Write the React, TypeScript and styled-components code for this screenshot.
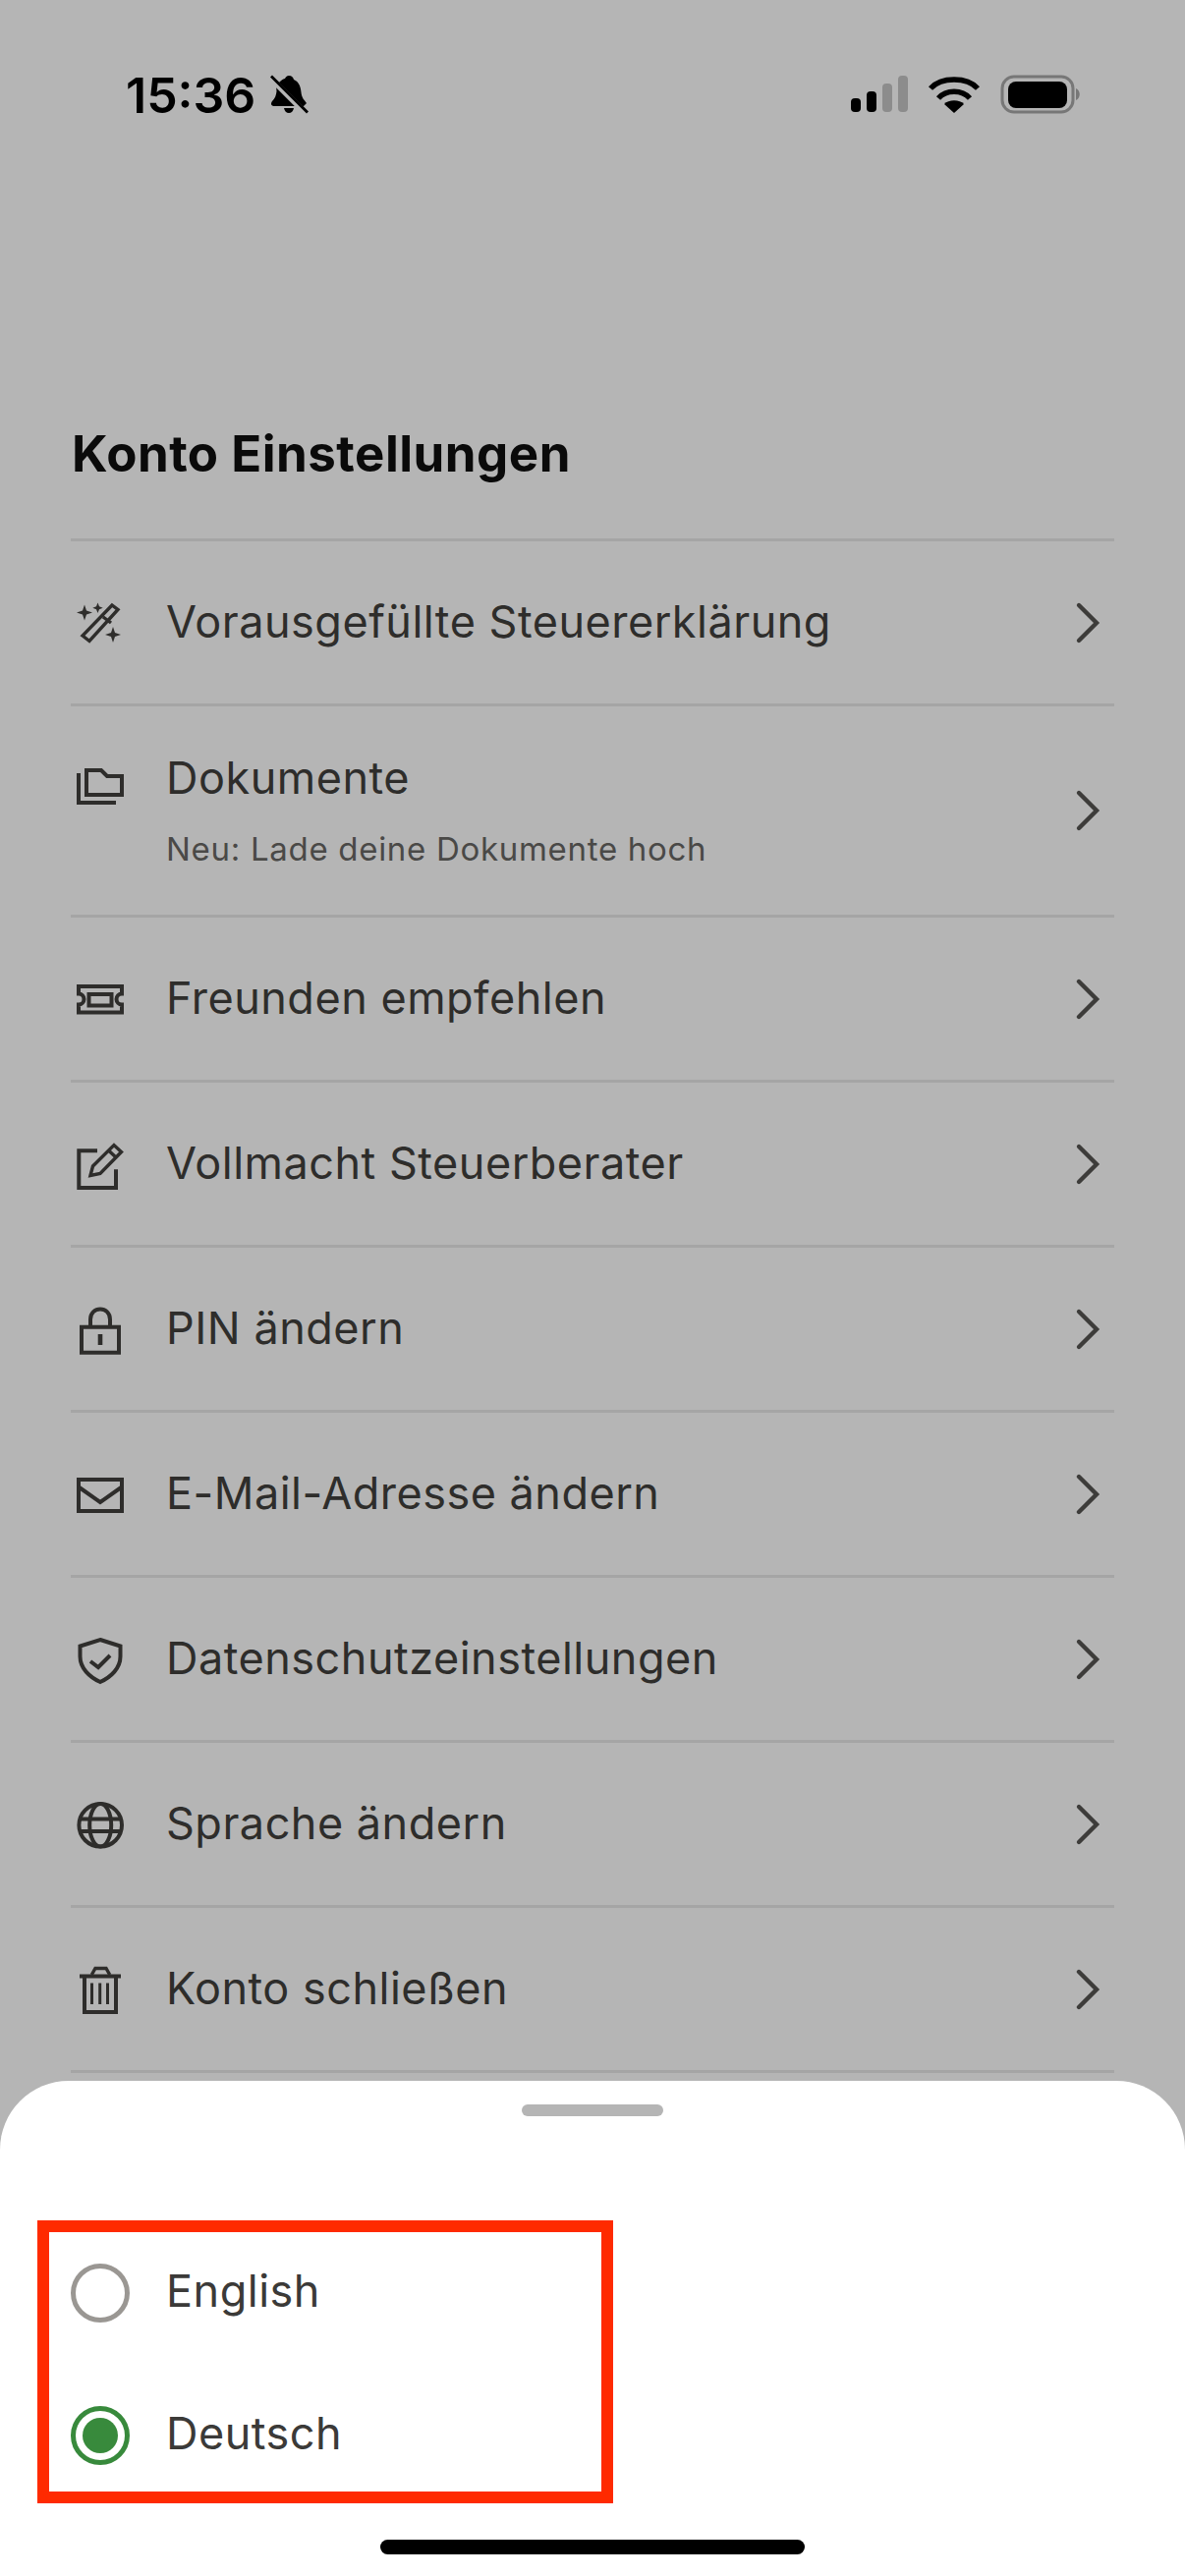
import React from 'react';
import styled, { createGlobalStyle } from 'styled-components';

const GlobalStyle = createGlobalStyle`
  html, body {
    margin: 0;
    padding: 0;
    background: #b5b5b5;
  }
  * {
    box-sizing: border-box;
  }
`;

const INK = '#2e2d2b';

const Svg: React.FC<{ children: React.ReactNode }> = ({ children }) => (
  <svg width="60" height="60" viewBox="0 0 60 60" fill="none" stroke={INK} strokeWidth="4">
    {children}
  </svg>
);

const WandIcon = () => (
  <Svg>
    <path d="M12 43 L19 48.5 L48 16.5 L42 12 Z M33 24 L41 30" strokeWidth="3.4" />
    <path
      d="M14 11.5 L16 17.5 L22 19.5 L16 21.5 L14 27.5 L12 21.5 L6 19.5 L12 17.5 Z M27.5 9.5 L29 13.2 L32.7 14.7 L29 16.2 L27.5 20 L26 16.2 L22.3 14.7 L26 13.2 Z M43 34 L45 40 L51 42 L45 44 L43 50 L41 44 L35 42 L41 40 Z"
      fill={INK}
      stroke="none"
    />
  </Svg>
);

const FolderIcon = () => (
  <Svg>
    <path d="M16 13 H31 L37 19 H52 V38 H16 Z" />
    <path d="M8 16 V46 H46" />
  </Svg>
);

const TicketIcon = () => (
  <Svg>
    <path d="M8 17 H52 V24.5 A5.5 5.5 0 0 0 52 35.5 V43.5 H8 V35.5 A5.5 5.5 0 0 0 8 24.5 Z" />
    <path d="M18.5 25 H41.5 V36.5 H18.5 Z" />
  </Svg>
);

const PencilIcon = () => (
  <Svg>
    <path d="M27 16.3 H8.3 V54 H46 V35.3" />
    <path d="M20 41.5 L22.5 32 L44 10.5 L51.5 17.5 L30 39.5 Z M38.5 16 L46 23" strokeWidth="3.4" />
  </Svg>
);

const LockIcon = () => (
  <Svg>
    <path d="M11 27.7 H49 V53.7 H11 Z" />
    <path d="M20 27 V20 C20 6 40 6 40 20 V27" />
    <path d="M30 35 V46" strokeWidth="4.6" />
  </Svg>
);

const MailIcon = () => (
  <Svg>
    <path d="M8 15 H52 V47 H8 Z" />
    <path d="M8 22.5 L30 38 L52 22.5" />
  </Svg>
);

const ShieldIcon = () => (
  <Svg>
    <path d="M30 10 L50.5 16.5 V27 C50.5 39 41 48 30 53 C19 48 9.5 39 9.5 27 V16.5 Z" />
    <path d="M20 32 L28 38 L40 26" />
  </Svg>
);

const GlobeIcon = () => (
  <Svg>
    <circle cx="30.2" cy="30.8" r="21.8" />
    <ellipse cx="30.2" cy="30.8" rx="11" ry="21.8" />
    <path d="M9 24.5 H51 M9 37 H51" />
  </Svg>
);

const TrashIcon = () => (
  <Svg>
    <path d="M9 16.6 H51 M14 17 V53 H46 V17" />
    <path d="M21.3 15 L25 8.5 H36 L39.7 15" strokeWidth="3.4" />
    <path d="M21.5 23.5 V45 M29.7 23.5 V45 M37.5 23.5 V45" strokeWidth="3" />
  </Svg>
);

const Chevron = () => (
  <svg width="28" height="44" viewBox="0 0 28 44" fill="none" stroke="#3d3c3a" strokeWidth="4.4" strokeLinecap="round">
    <path d="M6 4 L24 22 L6 40" />
  </svg>
);

const BellOff = () => (
  <svg width="40" height="42" viewBox="0 0 40 42">
    <path
      d="M20 1 C23 1 24.5 3 25 5 C30 7 32 12 32.5 18 C33 24 36 26 38 29 L35 32 H6 C2 32 1 30 3 27 C6 24 7 21 7.5 17 L7 11 L11 7 C13 5 15 4 16 4 C16.5 2.5 18 1 20 1 Z M15 34 H25 C24.5 37 22.5 39 20 39 C17.5 39 15.5 37 15 34 Z"
      fill="#000"
    />
    <path d="M1 3 L39 41" stroke="#b5b5b5" strokeWidth="6" />
    <path d="M2 1.5 L39 38.5" stroke="#000" strokeWidth="2.8" />
  </svg>
);

const StatusIcons = () => (
  <svg width="236" height="44" viewBox="0 0 236 44">
    <rect x="0" y="25" width="10" height="14" rx="4" fill="#000" />
    <rect x="16" y="18" width="10" height="21" rx="4" fill="#000" />
    <rect x="32" y="10" width="10" height="29" rx="4" fill="#8c8c8c" />
    <rect x="48" y="2" width="10" height="37" rx="4" fill="#8c8c8c" />
    <path d="M105 40 L95 31 C99 26 111 26 115 31 Z" fill="#000" />
    <path d="M89 25 C97 16 113 16 121 25" fill="none" stroke="#000" strokeWidth="5.5" />
    <path d="M81 15 C92 3 118 3 129 15" fill="none" stroke="#000" strokeWidth="5.5" />
    <rect x="154" y="3" width="72" height="36" rx="12" fill="none" stroke="#777" strokeWidth="3" />
    <rect x="160" y="8" width="60" height="27" rx="8" fill="#000" />
    <path d="M229 15 C234 17 234 25 229 27 Z" fill="#777" />
  </svg>
);

interface RowData {
  icon: React.ReactNode;
  label: string;
  hint?: string;
}

const rows: RowData[] = [
  { icon: <WandIcon />, label: 'Vorausgefüllte Steuererklärung' },
  { icon: <FolderIcon />, label: 'Dokumente', hint: 'Neu: Lade deine Dokumente hoch' },
  { icon: <TicketIcon />, label: 'Freunden empfehlen' },
  { icon: <PencilIcon />, label: 'Vollmacht Steuerberater' },
  { icon: <LockIcon />, label: 'PIN ändern' },
  { icon: <MailIcon />, label: 'E-Mail-Adresse ändern' },
  { icon: <ShieldIcon />, label: 'Datenschutzeinstellungen' },
  { icon: <GlobeIcon />, label: 'Sprache ändern' },
  { icon: <TrashIcon />, label: 'Konto schließen' },
];

export default function App() {
  return (
    <>
      <GlobalStyle />
      <Screen>
        <StatusBar>
          <TimeGroup>
            <Time>15:36</Time>
            <BellOff />
          </TimeGroup>
          <StatusIcons />
        </StatusBar>
        <Title>Konto Einstellungen</Title>
        <List>
          {rows.map((row) => (
            <Row key={row.label} $tall={!!row.hint}>
              <IconSlot $tall={!!row.hint}>{row.icon}</IconSlot>
              <RowText>
                <Label>{row.label}</Label>
                {row.hint && <Hint>{row.hint}</Hint>}
              </RowText>
              <Chevron />
            </Row>
          ))}
        </List>
        <Sheet>
          <Handle />
          <Highlight>
            <Option>
              <Radio $on={false} />
              <OptionLabel>English</OptionLabel>
            </Option>
            <Option>
              <Radio $on={true} />
              <OptionLabel>Deutsch</OptionLabel>
            </Option>
          </Highlight>
          <HomeBar />
        </Sheet>
      </Screen>
    </>
  );
}

const Screen = styled.div`
  position: relative;
  width: 1206px;
  height: 2622px;
  overflow: hidden;
  background: #b5b5b5;
  font-family: Inter, 'Liberation Sans', sans-serif;
`;

const StatusBar = styled.div`
  display: flex;
  justify-content: space-between;
  align-items: center;
  height: 194px;
  padding: 0 104px 0 128px;
`;

const TimeGroup = styled.div`
  display: flex;
  align-items: center;
  gap: 14px;
`;

const Time = styled.div`
  font-size: 50px;
  font-weight: 600;
  color: #000;
`;

const Title = styled.h1`
  margin: 0;
  height: 354px;
  padding: 239px 0 0 73px;
  font-size: 51px;
  font-weight: 700;
  line-height: 58px;
  letter-spacing: 0.5px;
  color: #0a0a0a;
`;

const List = styled.div`
  margin: 0 72px;
  border-top: 3px solid #a5a5a5;
`;

const Row = styled.div<{ $tall: boolean }>`
  display: flex;
  align-items: center;
  height: ${(p) => (p.$tall ? 215 : 168)}px;
  border-bottom: 3px solid #a5a5a5;
  padding-right: 14px;
`;

const IconSlot = styled.div<{ $tall: boolean }>`
  display: flex;
  width: 97px;
  align-self: ${(p) => (p.$tall ? 'flex-start' : 'center')};
  margin-top: ${(p) => (p.$tall ? 52 : 0)}px;
`;

const RowText = styled.div`
  flex: 1;
  display: flex;
  flex-direction: column;
  gap: 25px;
  padding-bottom: 1px;
`;

const Label = styled.div`
  font-size: 45px;
  line-height: 54px;
  letter-spacing: 0.5px;
  color: ${INK};
`;

const Hint = styled.div`
  font-size: 33px;
  line-height: 40px;
  letter-spacing: 0.7px;
  color: #4a4947;
`;

const Sheet = styled.div`
  position: absolute;
  left: 0;
  right: 0;
  bottom: 0;
  height: 504px;
  background: #fff;
  border-radius: 70px 70px 0 0;
  padding: 24px 0 0 38px;
`;

const Handle = styled.div`
  width: 144px;
  height: 12px;
  margin-left: 493px;
  border-radius: 6px;
  background: #b5b5b5;
`;

const Highlight = styled.div`
  width: 586px;
  height: 288px;
  margin-top: 106px;
  border: 12px solid #ff2a00;
  padding: 32px 0 0 22px;
  display: flex;
  flex-direction: column;
  gap: 85px;
`;

const Option = styled.div`
  display: flex;
  align-items: center;
  height: 60px;
  gap: 37px;
`;

const Radio = styled.div<{ $on: boolean }>`
  width: 60px;
  height: 60px;
  border-radius: 50%;
  border: 5px solid ${(p) => (p.$on ? '#388a3c' : '#9a9793')};
  padding: 7px;
  background: ${(p) => (p.$on ? '#388a3c' : '#fff')};
  background-clip: content-box;
`;

const OptionLabel = styled.div`
  font-size: 45px;
  letter-spacing: 0.5px;
  padding-bottom: 6px;
  color: #3b3a38;
`;

const HomeBar = styled.div`
  position: absolute;
  left: 387px;
  bottom: 22px;
  width: 432px;
  height: 15px;
  border-radius: 8px;
  background: #000;
`;
